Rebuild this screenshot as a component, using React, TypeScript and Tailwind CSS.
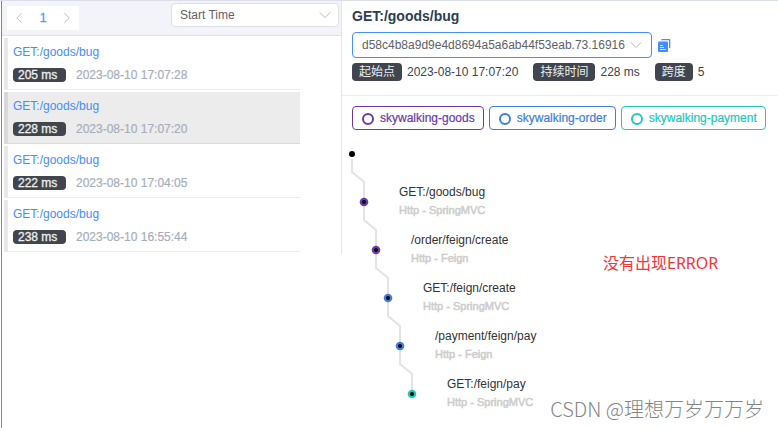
import { ChevronDown, ChevronLeft, ChevronRight } from "lucide-react";

type Trace = { id: string; name: string; duration: string; time: string };

const traces: Trace[] = [
  { id: "a", name: "GET:/goods/bug", duration: "205 ms", time: "2023-08-10 17:07:28" },
  { id: "b", name: "GET:/goods/bug", duration: "228 ms", time: "2023-08-10 17:07:20" },
  { id: "c", name: "GET:/goods/bug", duration: "222 ms", time: "2023-08-10 17:04:05" },
  { id: "d", name: "GET:/goods/bug", duration: "238 ms", time: "2023-08-10 16:55:44" },
];

const services = [
  { name: "skywalking-goods", style: "border-[#6a3aab] text-[#6a3aab]" },
  { name: "skywalking-order", style: "border-[#3f7de0] text-[#3f7de0]" },
  { name: "skywalking-payment", style: "border-[#22c7bd] text-[#22c7bd]" },
];

const spans = [
  { name: "GET:/goods/bug", layer: "Http - SpringMVC", color: "#6a3aab" },
  { name: "/order/feign/create", layer: "Http - Feign", color: "#6a3aab" },
  { name: "GET:/feign/create", layer: "Http - SpringMVC", color: "#3f7de0" },
  { name: "/payment/feign/pay", layer: "Http - Feign", color: "#3f7de0" },
  { name: "GET:/feign/pay", layer: "Http - SpringMVC", color: "#22c7bd" },
];

const INDENT = 12;
const ROW = 48;

function Pagination() {
  return (
    <nav aria-label="Pages" className="flex h-6 w-[72px] items-center justify-between bg-white px-[3px] text-[#b4b8c0]">
      <button type="button" aria-label="Previous page" className="flex w-[18px] justify-center">
        <ChevronLeft size={18} strokeWidth={1.3} />
      </button>
      <button type="button" aria-current="page" className="text-[#409eff] [-webkit-text-stroke:0.3px]">1</button>
      <button type="button" aria-label="Next page" className="flex w-[18px] justify-center">
        <ChevronRight size={18} strokeWidth={1.3} />
      </button>
    </nav>
  );
}

function TraceList() {
  return (
    <section className="min-h-[253px] w-[340px] shrink-0 border-r border-[#e2e4ea]">
      <header className="flex h-[35px] items-start justify-between border-b border-[#e0e3e9] bg-[#f3f4f9] pr-[2px] pl-[5px]">
        <div className="pt-[5px]">
          <Pagination />
        </div>
        <div className="relative mt-[2px] w-[168px]">
          <select aria-label="Sort order" className="block h-6 w-full appearance-none rounded border border-[#dcdfe6] bg-white px-2 text-[#606266]">
            <option>Start Time</option>
            <option>Duration</option>
          </select>
          <ChevronDown size={20} strokeWidth={1.2} className="pointer-events-none absolute top-[2px] right-1 text-[#b4b8c0]" />
        </div>
      </header>
      <ul className="flex w-[298px] flex-col gap-[2px] pt-[2px] pl-[2px]">
        {traces.map((t) => {
          const active = t.id === "b";
          return (
            <li
              key={t.id}
              className={
                "flex h-[52px] flex-col justify-between border-b border-l-4 pt-[6px] pb-[7px] pl-[5px] " +
                (active ? "border-b-[#dadada] border-l-[#d8d8d8] bg-[#ececec]" : "border-b-[#ececec] border-l-[#e8e8e8]")
              }
            >
              <a href="#trace" className="leading-4 text-[#448dfe]">{t.name}</a>
              <div className="flex items-center gap-[10px]">
                <span className="h-[14px] w-[53px] rounded bg-[#40454e] px-[5px] leading-[14px] text-[#eeeeee] [-webkit-text-stroke:0.3px]">
                  {t.duration}
                </span>
                <span className="leading-[14px] text-[#a7aebb] [-webkit-text-stroke:0.2px]">{t.time}</span>
              </div>
            </li>
          );
        })}
      </ul>
    </section>
  );
}

function Fact({ label, value }: { label: string; value: string }) {
  return (
    <div className="flex items-center gap-[5px]">
      <dt className="h-[18px] rounded bg-[#40454e] px-[7px] leading-[18px] text-[#eeeeee]">{label}</dt>
      <dd className="leading-[18px]">{value}</dd>
    </div>
  );
}

function CopyIcon() {
  return (
    <svg width="13" height="14" viewBox="0 0 13 14" aria-hidden="true">
      <path d="M4 1h7.5a.8.8 0 0 1 .8.8V10H11V2.300H3.200V1.800A.8.8 0 0 1 4 1z" fill="#448dfe" />
      <path d="M1 3.500h8a1 1 0 0 1 1 1V13a1 1 0 0 1-1 1H1a1 1 0 0 1-1-1V4.500a1 1 0 0 1 1-1z" fill="#448dfe" />
      <path d="M2 7.500h3M2 9.500h4M2 11.500h6" stroke="#d6e6ff" />
    </svg>
  );
}

function SpanTree() {
  const links = spans.map((_, i) => {
    const x = 10 + i * INDENT;
    const y = 10 + i * ROW;
    return `M${x} ${i === 0 ? y + 5 : y}V${y + 18}L${x + INDENT} ${y + 28}V${y + ROW}`;
  });
  return (
    <div className="relative pt-[38px]">
      <svg className="absolute top-0 left-0" width="90" height="260" aria-hidden="true">
        {links.map((d) => (
          <path key={d} d={d} fill="none" stroke="#e3e3e3" strokeWidth="2" />
        ))}
        <circle cx="10" cy="10" r="3" fill="#000" />
        {spans.map((s, i) => (
          <g key={s.name}>
            <circle cx={22 + i * INDENT} cy={58 + i * ROW} r="4.3" fill={s.color} />
            <circle cx={22 + i * INDENT} cy={58 + i * ROW} r="2" fill="#000" />
          </g>
        ))}
      </svg>
      <ul>
        {spans.map((s, i) => (
          <li key={s.name} className="h-12" style={{ paddingLeft: 57 + i * INDENT }}>
            <p className="leading-5 text-[#333333]">{s.name}</p>
            <p className="text-[11px] leading-4 text-[#cccccc] [-webkit-text-stroke:0.5px]">{s.layer}</p>
          </li>
        ))}
      </ul>
    </div>
  );
}

function TraceDetail() {
  return (
    <section className="relative min-w-0 flex-1">
      <header className="border-b border-[#ebedf0] px-[10px] pt-[5px] pb-[14px] text-[#3d444f]">
        <h1 className="text-sm leading-5 font-bold text-[#2c3e50]">GET:/goods/bug</h1>
        <div className="mt-[6px] flex items-center gap-[6px]">
          <div className="relative w-[300px]">
            <select aria-label="Trace ID" className="block h-[26px] w-full appearance-none rounded border border-[#448dfe] bg-white px-[9px] text-[#606266]">
              <option>d58c4b8a9d9e4d8694a5a6ab44f53eab.73.16916</option>
            </select>
            <ChevronDown size={20} strokeWidth={1.2} className="pointer-events-none absolute top-[3px] right-[6px] text-[#b4b8c0]" />
          </div>
          <button type="button" aria-label="Copy trace ID">
            <CopyIcon />
          </button>
        </div>
        <dl className="mt-[5px] flex gap-[15px]">
          <Fact label="起始点" value="2023-08-10 17:07:20" />
          <Fact label="持续时间" value="228 ms" />
          <Fact label="跨度" value="5" />
        </dl>
      </header>
      <ul className="flex gap-[5px] px-[10px] pt-[10px]">
        {services.map((s) => (
          <li key={s.name} className={"flex h-6 items-center gap-[6px] rounded border pr-2 pl-[9px] [-webkit-text-stroke:0.2px] " + s.style}>
            <span className="mt-[2px] size-3 rounded-full border-2 border-current" />
            {s.name}
          </li>
        ))}
      </ul>
      <div className="pt-[14px]">
        <SpanTree />
      </div>
      <p className="absolute top-[250px] left-[261px] text-base leading-6 whitespace-nowrap text-[#fa3434] [font-family:'Noto_Sans','Noto_Sans_CJK_SC',sans-serif]">
        没有出现ERROR
      </p>
    </section>
  );
}

export default function App() {
  return (
    <main className="relative min-h-screen border-t border-[#dcdfe9] bg-white pl-[2px] text-xs [font-family:'Liberation_Sans','Noto_Sans_CJK_SC',sans-serif]">
      <div className="absolute inset-y-0 left-px w-px bg-[#4d94e8]" />
      <div className="flex items-start">
        <TraceList />
        <TraceDetail />
      </div>
      <p className="absolute right-[14px] bottom-[5px] text-xl leading-7 font-light whitespace-nowrap text-[#858585] [font-family:'Noto_Sans_CJK_SC',sans-serif]">
        CSDN @理想万岁万万岁
      </p>
    </main>
  );
}
